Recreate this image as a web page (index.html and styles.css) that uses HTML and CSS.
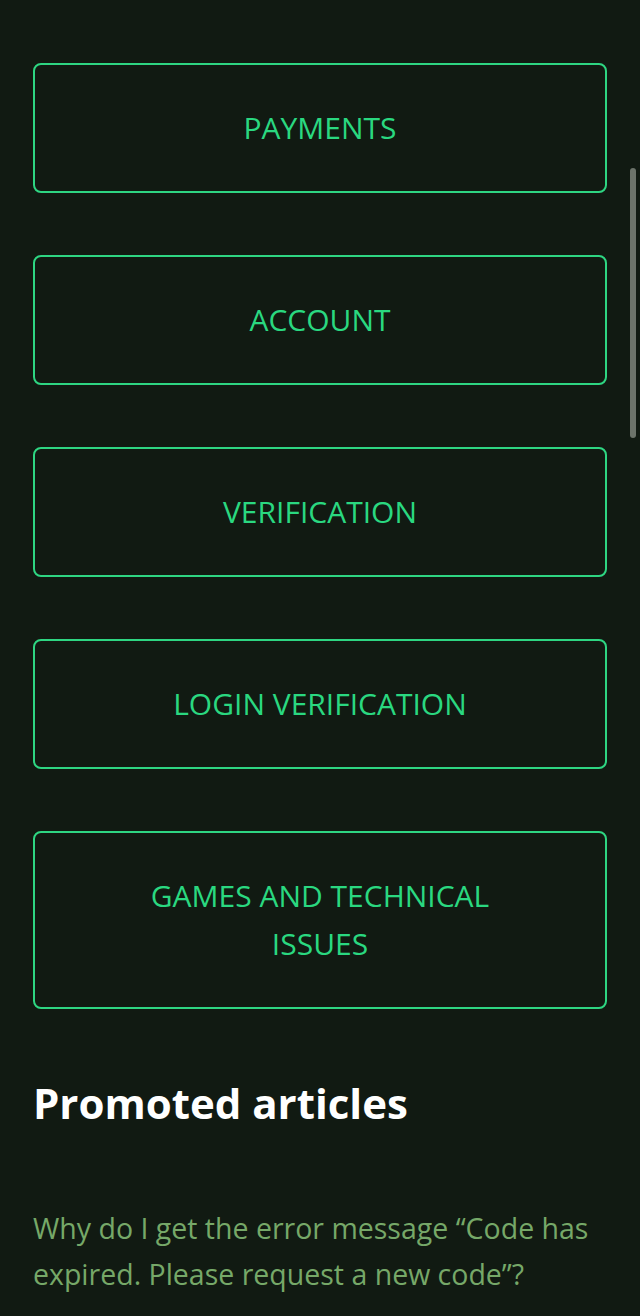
FILE: index.html
```html
<!DOCTYPE html>
<html>
<head>
	<meta charset="utf-8">
	<meta name="viewport" content="width=device-width, initial-scale=1">
	<title>Help Center</title>
	<link rel="stylesheet" href="styles.css">
</head>
<body>
<div class="container">
	<ul class="categories">
		<li><a class="category" href="#">Payments</a></li>
		<li><a class="category" href="#">Account</a></li>
		<li><a class="category" href="#">Verification</a></li>
		<li><a class="category" href="#">Login verification</a></li>
		<li><a class="category" href="#">Games and technical issues</a></li>
	</ul>
	<section class="promoted">
		<h2>Promoted articles</h2>
		<ul class="articles">
			<li><a href="#">Why do I get the error message “Code has expired. Please request a new code”?</a></li>
		</ul>
	</section>
</div>
<div class="scrollbar"></div>
</body>
</html>
```

FILE: styles.css
```css
*
{
	margin: 0;
	padding: 0;
	box-sizing: border-box;
}
body
{
	background: #111a12;
	font-family: "Open Sans", "Noto Sans", sans-serif;
	height: 1316px;
	overflow: hidden;
}
.container
{
	padding: 63px 33px 0;
}
.categories
{
	list-style: none;
	display: flex;
	flex-direction: column;
	gap: 62px;
}
.category
{
	display: block;
	border: 2px solid #2ed682;
	border-radius: 8px;
	padding: 39px 80px;
	color: #2ad880;
	text-decoration: none;
	text-align: center;
	text-transform: uppercase;
	font-size: 30px;
	line-height: 48px;
}
.promoted
{
	padding-top: 68px;
}
.promoted h2
{
	color: #fff;
	font-size: 42px;
	font-weight: 700;
	line-height: 52px;
	margin-bottom: 76px;
}
.articles
{
	list-style: none;
}
.articles a
{
	color: #76a868;
	text-decoration: none;
	font-size: 28.5px;
	line-height: 46px;
}
.scrollbar
{
	position: fixed;
	top: 168px;
	right: 4px;
	width: 6px;
	height: 270px;
	border-radius: 3px;
	background: #6c736a;
}
```
